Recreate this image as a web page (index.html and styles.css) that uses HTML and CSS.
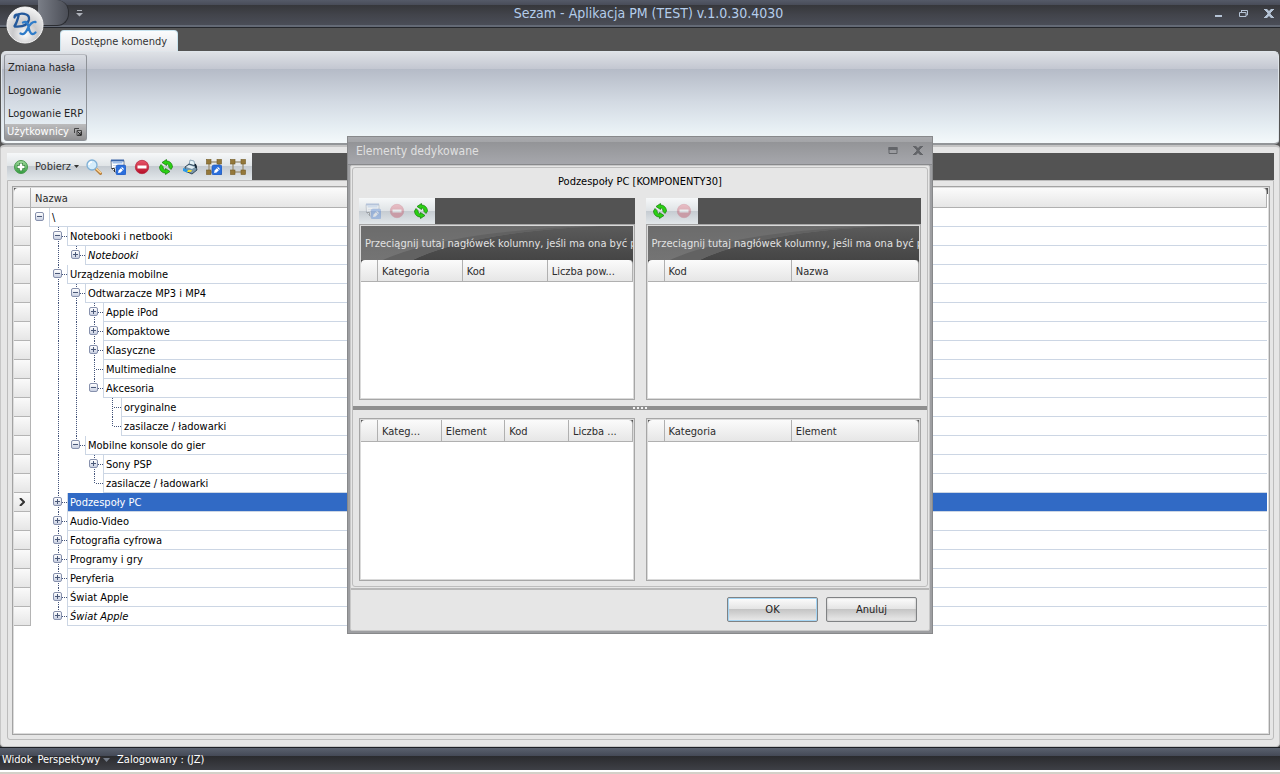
FILE: index.html
```
<!DOCTYPE html>
<html lang="pl">
<head>
<meta charset="utf-8">
<title>Sezam - Aplikacja PM (TEST) v.1.0.30.4030</title>
<link rel="stylesheet" href="styles.css">
</head>
<body>
<svg class="defs" aria-hidden="true">
  <defs>
    <linearGradient id="gg" x1="0" y1="0" x2="0" y2="1"><stop offset="0" stop-color="#a3dba0"/><stop offset="1" stop-color="#2f9a3b"/></linearGradient>
    <linearGradient id="rg" x1="0" y1="0" x2="0" y2="1"><stop offset="0" stop-color="#e8566a"/><stop offset="1" stop-color="#b50f28"/></linearGradient>
    <linearGradient id="swoop" x1="0" y1="0" x2="0" y2="1"><stop offset="0" stop-color="#6c6c6c"/><stop offset="1" stop-color="#747474"/></linearGradient>
  </defs>
  <symbol id="i-add" viewBox="0 0 16 16"><circle cx="8" cy="8" r="6.5" fill="url(#gg)" stroke="#4a9a50"/><path d="M8 4v8M4 8h8" stroke="#2d7c35" stroke-width="4"/><path d="M8 4.500v7M4.500 8h7" stroke="#fff" stroke-width="2.500"/></symbol>
  <symbol id="i-find" viewBox="0 0 16 16"><path d="M10 10l4.500 4.500" stroke="#b8803c" stroke-width="3" stroke-linecap="round"/><path d="M10 9.500l4.500 4" stroke="#ffd79a" stroke-width="1.500" stroke-linecap="round"/><circle cx="6" cy="6" r="5" fill="#d5edfb" stroke="#7fb0d6" stroke-width="1.300"/><path d="M3 6a3 3 0 0 1 3-3" stroke="#fff" stroke-width="1.500" fill="none"/></symbol>
  <symbol id="i-pen" viewBox="0 0 16 16"><rect x="6" y="6" width="10" height="10" rx="2" fill="#2b6fdc" stroke="#1c50b4" stroke-width=".6"/><path d="M8 14l.6-2.600L12 8l2 2-3.400 3.400z" fill="#fff"/><path d="M11 9l2 2" stroke="#2b6fdc" stroke-width=".7"/></symbol>
  <symbol id="i-edit" viewBox="0 0 16 16"><path d="M1 1.500h13V13H5L1.500 9.500z" fill="#fff" stroke="#7c8798"/><path d="M1 1.500h13" stroke="#3a64a8" stroke-width="2"/><path d="M2.500 3.500h10" stroke="#9dbde8" stroke-width="2"/><path d="M3 6.500h9M3 8.500h3" stroke="#cfd7e3"/><path d="M1.500 9.500h3V13" stroke="#333" fill="none"/><use href="#i-pen"/></symbol>
  <symbol id="i-del" viewBox="0 0 16 16"><circle cx="8" cy="8" r="6.700" fill="url(#rg)" stroke="#b3213a" stroke-width=".7"/><rect x="3.500" y="6.500" width="9" height="3" fill="#fff"/></symbol>
  <symbol id="i-ref" viewBox="0 0 16 16"><g stroke="#157a0c" stroke-width=".7" stroke-linejoin="round" fill="#2bd014"><path d="M4 3.500L8.500.5V2C12 2 14.300 4.500 14.500 8L13 10.500 11 8.500C11 6 10 5 8.500 5V6.500z"/><path d="M12 12.500L7.500 15.500V14C4 14 1.700 11.500 1.500 8L3 5.500 5 7.500C5 10 6 11 7.500 11V9.500z"/></g></symbol>
  <symbol id="i-print" viewBox="0 0 16 16"><path d="M8 1l4 1 1 5-6-1z" fill="#e6f4f8" stroke="#7a96aa" stroke-width=".8"/><path d="M3 8l4-3 7 2 1 4-5 4-7-3z" fill="#7795a8" stroke="#1d3246" stroke-width=".8"/><path d="M4 8l3-2 6 2-3 2z" fill="#e2eef4"/><path d="M1 9l5 2v3l-5-2z" fill="#2999e8"/><path d="M6 11h4l-1 2H5z" fill="#f4dc28"/><path d="M13 5l1 2v2" stroke="#10202e" stroke-width="1.500" fill="none"/></symbol>
  <symbol id="i-nodes" viewBox="0 0 16 16"><path d="M3 3h10M3 13h10M3 3v10M13 3v10" stroke="#a49a84" stroke-width="1.500"/><g fill="#94783a" stroke="#735a24" stroke-width=".6"><rect x=".5" y=".5" width="4.500" height="4.500"/><rect x="11" y=".5" width="4.500" height="4.500"/><rect x=".5" y="11" width="4.500" height="4.500"/><rect x="11" y="11" width="4.500" height="4.500"/></g></symbol>
  <symbol id="i-x" viewBox="0 0 10 9"><path d="M0 0h3.500v1h1v1h1V1h1V0H10v1H9v1H8v1H7v1H6.500v1H7v1h1v1h1v1h1v1H6.500V8h-1V7h-1v1h-1v1H0V8h1V7h1V6h1V5h.5V4H3V3H2V2H1V1H0z" fill="currentColor"/></symbol>
</svg>

<header class="titlebar">
  <div class="appmenu"></div>
  <button class="logo" aria-label="Menu aplikacji">
    <svg viewBox="0 0 38 38">
      <defs><radialGradient id="lg" cx=".5" cy=".75" r=".75"><stop offset="0" stop-color="#fff"/><stop offset=".45" stop-color="#c9c9cb"/><stop offset="1" stop-color="#f6f6f6"/></radialGradient></defs>
      <circle cx="19" cy="19" r="18" fill="url(#lg)" stroke="#f4f4f4"/>
      <path d="M13 8.500C11.500 13 11 17 8.500 20M9 10C14 6 24 7 23 13.500 22 19 16 21 9 20.500M8.500 11.500C8.500 9.500 10 8.500 12 8.500" fill="none" stroke="#24599c" stroke-width="2.300" stroke-linecap="round"/>
      <path d="M17 16.500C22 14.500 22 19 23 23S26 30 29.500 26.500M29.500 16C25 15.500 23 20 21.500 23S18 29.500 14.500 27.500" fill="none" stroke="#2f7cc9" stroke-width="2.300" stroke-linecap="round"/>
    </svg>
  </button>
  <button class="qat" aria-label="Dostosuj"><svg viewBox="0 0 7 7"><path d="M1 0h5v1H1zM0 3h7L3.500 6.500z" fill="#aeb2ba"/></svg></button>
  <h1>Sezam - Aplikacja PM (TEST) v.1.0.30.4030</h1>
  <div class="winbtns">
    <button aria-label="Minimalizuj"><svg viewBox="0 0 10 9"><path d="M1 6h7v2H1z" fill="currentColor"/></svg></button>
    <button aria-label="Przywróć"><svg viewBox="0 0 10 9"><path d="M2.500 1v2M2 1.500h6.500v4.500H7" fill="none" stroke="currentColor"/><path d="M.5 3.500h6.500v4H.5z" fill="none" stroke="currentColor"/></svg></button>
    <button aria-label="Zamknij"><svg viewBox="0 0 10 9"><use href="#i-x"/></svg></button>
  </div>
</header>
<nav class="tabs"><button class="tab">Dostępne komendy</button></nav>
<section class="ribbon">
  <div class="group">
    <button>Zmiana hasła</button>
    <button>Logowanie</button>
    <button>Logowanie ERP</button>
    <div class="caption"><span>Użytkownicy</span><svg viewBox="0 0 8 8"><path d="M.5 5V.5H5M3 2.500h4.500v5H3z" fill="none" stroke="#444"/><path d="M3.500 3.500L7 7M7 4v3H4" fill="none" stroke="#222"/></svg></div>
  </div>
</section>

<main class="workspace">
  <div class="toolrow">
    <div class="tools">
      <button class="wide"><svg class="ic"><use href="#i-add"/></svg><span>Pobierz</span><svg class="arrow" viewBox="0 0 5 3"><path d="M0 0h5L2.500 3z" fill="#333"/></svg></button>
      <button aria-label="Szukaj"><svg class="ic"><use href="#i-find"/></svg></button>
      <button aria-label="Edytuj"><svg class="ic"><use href="#i-edit"/></svg></button>
      <button aria-label="Usuń"><svg class="ic"><use href="#i-del"/></svg></button>
      <button aria-label="Odśwież"><svg class="ic"><use href="#i-ref"/></svg></button>
      <button aria-label="Drukuj"><svg class="ic"><use href="#i-print"/></svg></button>
      <button aria-label="Edytuj powiązania"><svg class="ic"><use href="#i-nodes"/><use href="#i-pen"/></svg></button>
      <button aria-label="Powiązania"><svg class="ic"><use href="#i-nodes"/></svg></button>
    </div>
  </div>
  <div class="frame">
    <div class="treebox">
      <table class="tree">
        <colgroup><col class="ind"><col></colgroup>
        <thead><tr><th></th><th>Nazwa</th></tr></thead>
        <tbody>
          <tr><td></td><td><div><i><button class="m" aria-label="Zwiń"></button></i><span>\</span></div></td></tr>
          <tr><td></td><td><div><i></i><i class="t"><button class="m" aria-label="Zwiń"></button></i><span>Notebooki i netbooki</span></div></td></tr>
          <tr><td></td><td><div><i></i><i class="v"></i><i class="l"><button aria-label="Rozwiń"></button></i><span><em>Notebooki</em></span></div></td></tr>
          <tr><td></td><td><div><i></i><i class="t"><button class="m" aria-label="Zwiń"></button></i><span>Urządzenia mobilne</span></div></td></tr>
          <tr><td></td><td><div><i></i><i class="v"></i><i class="t"><button class="m" aria-label="Zwiń"></button></i><span>Odtwarzacze MP3 i MP4</span></div></td></tr>
          <tr><td></td><td><div><i></i><i class="v"></i><i class="v"></i><i class="t"><button aria-label="Rozwiń"></button></i><span>Apple iPod</span></div></td></tr>
          <tr><td></td><td><div><i></i><i class="v"></i><i class="v"></i><i class="t"><button aria-label="Rozwiń"></button></i><span>Kompaktowe</span></div></td></tr>
          <tr><td></td><td><div><i></i><i class="v"></i><i class="v"></i><i class="t"><button aria-label="Rozwiń"></button></i><span>Klasyczne</span></div></td></tr>
          <tr><td></td><td><div><i></i><i class="v"></i><i class="v"></i><i class="t"></i><span>Multimedialne</span></div></td></tr>
          <tr><td></td><td><div><i></i><i class="v"></i><i class="v"></i><i class="l"><button class="m" aria-label="Zwiń"></button></i><span>Akcesoria</span></div></td></tr>
          <tr><td></td><td><div><i></i><i class="v"></i><i class="v"></i><i></i><i class="t"></i><span>oryginalne</span></div></td></tr>
          <tr><td></td><td><div><i></i><i class="v"></i><i class="v"></i><i></i><i class="l"></i><span>zasilacze / ładowarki</span></div></td></tr>
          <tr><td></td><td><div><i></i><i class="v"></i><i class="l"><button class="m" aria-label="Zwiń"></button></i><span>Mobilne konsole do gier</span></div></td></tr>
          <tr><td></td><td><div><i></i><i class="v"></i><i></i><i class="t"><button aria-label="Rozwiń"></button></i><span>Sony PSP</span></div></td></tr>
          <tr><td></td><td><div><i></i><i class="v"></i><i></i><i class="l"></i><span>zasilacze / ładowarki</span></div></td></tr>
          <tr class="sel"><td><svg class="cur" viewBox="0 0 6 8"><path d="M1 0l4 4-4 4" fill="none" stroke="#333" stroke-width="2"/></svg></td><td><div><i></i><i class="t"><button aria-label="Rozwiń"></button></i><span>Podzespoły PC</span></div></td></tr>
          <tr><td></td><td><div><i></i><i class="t"><button aria-label="Rozwiń"></button></i><span>Audio-Video</span></div></td></tr>
          <tr><td></td><td><div><i></i><i class="t"><button aria-label="Rozwiń"></button></i><span>Fotografia cyfrowa</span></div></td></tr>
          <tr><td></td><td><div><i></i><i class="t"><button aria-label="Rozwiń"></button></i><span>Programy i gry</span></div></td></tr>
          <tr><td></td><td><div><i></i><i class="t"><button aria-label="Rozwiń"></button></i><span>Peryferia</span></div></td></tr>
          <tr><td></td><td><div><i></i><i class="t"><button aria-label="Rozwiń"></button></i><span>Świat Apple</span></div></td></tr>
          <tr><td></td><td><div><i></i><i class="l"><button aria-label="Rozwiń"></button></i><span><em>Świat Apple</em></span></div></td></tr>
        </tbody>
      </table>
    </div>
  </div>
</main>

<footer class="status"><button>Widok</button><button>Perspektywy<svg class="arrow big" viewBox="0 0 7 4"><path d="M0 0h7L3.500 4z" fill="#747b88"/></svg></button><span>Zalogowany : (JZ)</span></footer>

<div class="dialog" role="dialog" aria-labelledby="dt">
  <div class="dtitle">
    <h2 id="dt">Elementy dedykowane</h2>
    <button aria-label="Maksymalizuj"><svg viewBox="0 0 10 9"><path d="M1 1.500h8v6H1z" fill="none" stroke="currentColor"/><path d="M.5 1h9v3h-9z" fill="currentColor"/></svg></button>
    <button aria-label="Zamknij"><svg viewBox="0 0 10 9"><use href="#i-x"/></svg></button>
  </div>
  <div class="dbody">
    <div class="content">
      <p>Podzespoły PC [KOMPONENTY30]</p>
      <div class="pair top">
        <section>
          <div class="toolrow"><div class="tools">
            <button disabled aria-label="Edytuj"><svg class="ic"><use href="#i-edit"/></svg></button>
            <button disabled aria-label="Usuń"><svg class="ic"><use href="#i-del"/></svg></button>
            <button aria-label="Odśwież"><svg class="ic"><use href="#i-ref"/></svg></button>
          </div></div>
          <div class="grid">
            <div class="groupby"><svg viewBox="0 0 273 34" preserveAspectRatio="none"><path d="M0 0h240Q110 6 52 34H0z" fill="url(#swoop)"/><path d="M240 0Q90 4 22 34h30Q110 6 240 0z" fill="#626262"/></svg><span>Przeciągnij tutaj nagłówek kolumny, jeśli ma ona być po</span></div>
            <table><colgroup><col class="ind"><col><col><col></colgroup><thead><tr><th></th><th>Kategoria</th><th>Kod</th><th>Liczba pow...</th></tr></thead></table>
          </div>
        </section>
        <section>
          <div class="toolrow"><div class="tools">
            <button aria-label="Odśwież"><svg class="ic"><use href="#i-ref"/></svg></button>
            <button disabled aria-label="Usuń"><svg class="ic"><use href="#i-del"/></svg></button>
          </div></div>
          <div class="grid">
            <div class="groupby"><svg viewBox="0 0 273 34" preserveAspectRatio="none"><path d="M0 0h240Q110 6 52 34H0z" fill="url(#swoop)"/><path d="M240 0Q90 4 22 34h30Q110 6 240 0z" fill="#626262"/></svg><span>Przeciągnij tutaj nagłówek kolumny, jeśli ma ona być po</span></div>
            <table><colgroup><col class="ind"><col><col></colgroup><thead><tr><th></th><th>Kod</th><th>Nazwa</th></tr></thead></table>
          </div>
        </section>
      </div>
      <div class="splitter"><b></b><b></b><b></b><b></b></div>
      <div class="pair bottom">
        <section><div class="grid corner"><table><colgroup><col class="ind"><col><col><col><col></colgroup><thead><tr><th></th><th>Kateg...</th><th>Element</th><th>Kod</th><th>Liczba ...</th></tr></thead></table></div></section>
        <section><div class="grid corner"><table><colgroup><col class="ind"><col><col></colgroup><thead><tr><th></th><th>Kategoria</th><th>Element</th></tr></thead></table></div></section>
      </div>
    </div>
    <div class="actions"><button class="ok">OK</button><button>Anuluj</button></div>
  </div>
</div>
</body>
</html>
```
FILE: styles.css
```
* { box-sizing: border-box; }
body {
  margin: 0;
  height: 100vh;
  display: flex;
  flex-direction: column;
  overflow: hidden;
  background: #535353;
  color: #000;
  font: 11px/14px "DejaVu Sans Condensed", "DejaVu Sans", sans-serif;
}
button {
  font: inherit;
  color: inherit;
  background: none;
  border: 0;
  padding: 0;
  margin: 0;
  text-align: left;
}
svg { display: block; flex: none; }
.defs { position: absolute; width: 0; height: 0; }
.ic { width: 16px; height: 16px; }

.titlebar {
  position: relative;
  height: 28px;
  display: flex;
  align-items: center;
  padding: 0 6px 2px 76px;
  background: linear-gradient(#555a68 0, #484c58 5px, #36373b 5px, #42444b 15px, #4a4d57 25px, #646a76 25px, #646a76 27px, #25272c 27px);
}
.appmenu {
  position: absolute;
  left: 38px;
  top: 0;
  width: 31px;
  height: 26px;
  border: 1px solid #2b2d32;
  border-width: 0 1px 1px 0;
  border-radius: 0 12px 12px 0;
  background: linear-gradient(90deg, #7a7e87, #4b4e57);
}
.logo { position: absolute; left: 6px; top: 6px; z-index: 1; }
.logo svg { width: 38px; height: 38px; }
.qat svg { width: 7px; height: 7px; }
.titlebar h1 {
  flex: 1;
  margin: 0;
  text-align: center;
  font-size: 14px;
  line-height: 16px;
  font-weight: 400;
  color: #b4cdeb;
}
.winbtns { display: flex; gap: 15px; color: #b5c3d5; }
.winbtns svg { width: 10px; height: 9px; }

.tabs { height: 23px; display: flex; align-items: flex-end; padding-left: 60px; }
.tab {
  height: 21px;
  padding: 2px 10px 0;
  border: 1px solid #c9e3ee;
  border-bottom: 0;
  border-radius: 4px 4px 0 0;
  background: linear-gradient(#fbfcfd, #e4e6ea);
  color: #333;
}
.ribbon {
  height: 94px;
  margin: 0 1px;
  padding: 2px;
  border: 1px solid #dfe5ea;
  border-bottom: 2px solid #929598;
  border-radius: 5px;
  background: linear-gradient(#dee1e6 0, #c3c7d1 17px, #b5bbc7 17px, #d3dae3 50px, #e6eef3 75px, #f4f9fb 100%);
}
.group {
  width: 83px;
  height: 87px;
  border: 1px solid #8e9298;
  border-top-color: #b7bac0;
  border-radius: 3px;
  display: flex;
  flex-direction: column;
  color: #252525;
}
.group button { height: 23px; padding: 2px 0 0 3px; white-space: nowrap; }
.group .caption {
  flex: 1;
  display: flex;
  align-items: center;
  justify-content: space-between;
  padding: 0 4px 0 2px;
  color: #fff;
  background: linear-gradient(#bcbcbd, #909092);
}
.caption svg { width: 8px; height: 8px; }

.workspace {
  flex: 1;
  min-height: 0;
  display: flex;
  flex-direction: column;
  padding: 6px 5px 6px 6px;
  background: #e6e6e6;
  border: 1px solid #c6c6c6;
  border-top: 2px solid #c4c4c4;
  border-radius: 4px;
}
.toolrow { height: 27px; display: flex; background: #535353; }
.tools {
  display: flex;
  align-items: center;
  gap: 8px;
  padding: 0 6px;
  background: linear-gradient(#f6f8f9, #dfe3e6 50%, #c5cbd1 50%, #e2e7ea);
}
.tools .wide { display: flex; align-items: center; gap: 6px; color: #333; margin-right: -1px; }
.tools .wide .arrow { width: 5px; height: 3px; margin-left: -3px; }
.tools button:disabled { opacity: .3; }
.frame {
  flex: 1;
  min-height: 0;
  display: flex;
  padding: 5px 3px 4px 4px;
  border: 1px solid #bcbcbc;
  border-radius: 0 0 3px 3px;
}
.treebox { flex: 1; border: 1px solid #a3a3a3; padding: 1px 2px 1px 1px; box-shadow: inset 0 0 0 1px #dcdcdc; }
table { width: 100%; border-collapse: separate; border-spacing: 0; table-layout: fixed; }
.ind { width: 17px; }
th {
  height: 22px;
  padding: 2px 4px 0;
  text-align: left;
  font-weight: 400;
  color: #2c2c2c;
  border-right: 1px solid #b0b0b0;
  border-bottom: 1px solid #b0b0b0;
  background: linear-gradient(#fbfbfb, #e6e6e6);
  overflow: hidden;
  text-overflow: ellipsis;
  white-space: nowrap;
}
.tree th { height: 20px; }
th:first-child { border-top-left-radius: 4px; }
th:last-child { border-top-right-radius: 4px; }
.tree td { height: 19px; padding: 0; vertical-align: top; }
.tree td:first-child {
  border-right: 1px solid #b4b4b4;
  border-bottom: 1px solid #b4b4b4;
  background: linear-gradient(#fafafa, #e6e6e6);
}
.tree div { display: flex; height: 19px; }
.tree i { position: relative; width: 18px; flex: none; }
.v, .t, .l { --dot: repeating-linear-gradient(#44547a 0 1px, #fff 1px 2px); }
.v { background: var(--dot) 9px 0 / 1px 100% no-repeat; }
.t { background: var(--dot) 9px 0 / 1px 100% no-repeat, repeating-linear-gradient(90deg, #44547a 0 1px, #fff 1px 2px) 9px 9px / 9px 1px no-repeat; }
.l { background: var(--dot) 9px 0 / 1px 10px no-repeat, repeating-linear-gradient(90deg, #44547a 0 1px, #fff 1px 2px) 9px 9px / 9px 1px no-repeat; }
.tree i button {
  position: absolute;
  left: 4px;
  top: 4px;
  width: 9px;
  height: 9px;
  border: 1px solid #8791ad;
  border-radius: 2px;
  background:
    linear-gradient(#4a5878, #4a5878) center / 5px 1px no-repeat,
    linear-gradient(#4a5878, #4a5878) center / 1px 5px no-repeat,
    linear-gradient(#fff, #c9d0e2);
}
.tree i button.m { background: linear-gradient(#4a5878, #4a5878) center / 5px 1px no-repeat, linear-gradient(#fff, #c9d0e2); }
.tree span {
  flex: 1;
  padding: 3px 2px 0;
  border-left: 1px solid #ccd6e4;
  border-bottom: 1px solid #ccd6e4;
  white-space: nowrap;
}
.tree em { display: block; }
.sel span { background: #316ac5; color: #fff; }
.cur { width: 6px; height: 8px; margin: 5px auto 0; }

.status {
  height: 27px;
  display: flex;
  align-items: center;
  gap: 5px;
  padding: 0 2px;
  color: #fff;
  border-bottom: 2px solid #d4d0c8;
  background: linear-gradient(#1d2025 0, #1d2025 1px, #5a616e 1px, #444956 9px, #2a2b2e 9px, #3e4046 23px, #fff 23px);
}
.status button { display: flex; align-items: center; gap: 3px; }
.arrow.big { width: 7px; height: 4px; margin-right: 2px; }

.dialog {
  position: absolute;
  top: 136px;
  left: 50%;
  width: 586px;
  height: 498px;
  margin-left: -293px;
  display: flex;
  flex-direction: column;
  border: 1px solid #88898b;
  background: #9d9ea1;
  padding: 0 2px 2px;
}
.dtitle {
  height: 28px;
  display: flex;
  align-items: center;
  gap: 15px;
  margin: 0 -2px;
  padding: 0 9px 0 8px;
  color: #636569;
  border-bottom: 1px solid #88898c;
  background: linear-gradient(#a9aaae 0, #a3a4a7 5px, #939497 5px, #a6a7ac 100%);
}
.dtitle h2 { flex: 1; margin: 0; font-size: 12px; line-height: 16px; font-weight: 400; color: #e0e0e0; }
.dtitle svg { width: 10px; height: 9px; }
.dbody {
  flex: 1;
  display: flex;
  flex-direction: column;
  padding: 1px 1px 0;
  border: 1px solid #c8c8c8;
  border-radius: 2px;
  background: #e6e6e6;
}
.content {
  flex: 1;
  display: flex;
  flex-direction: column;
  border: 1px solid #bdbdbd;
  border-radius: 3px;
}
.content p { margin: 7px 0 9px; text-align: center; }
.pair { display: grid; grid-template-columns: 1fr 1fr; gap: 11px; padding: 0 6px; }
.pair section { display: flex; flex-direction: column; min-width: 0; }
.pair .toolrow { height: 26px; }
.top { flex: 202; }
.bottom { flex: 163; margin: 8px 0 5px; }
.grid { flex: 1; border: 1px solid #a6a6a6; outline: 1px solid #dadada; outline-offset: -2px; padding: 1px; }
.groupby {
  position: relative;
  height: 34px;
  padding-left: 4px;
  background: linear-gradient(#5b5b5b, #454545);
  color: #e2e2e2;
  white-space: nowrap;
}
.groupby svg { position: absolute; left: 0; top: 0; width: 100%; height: 100%; }
.groupby span { position: relative; display: block; overflow: hidden; padding-top: 1px; line-height: 33px; }
.grid { background: linear-gradient(#454545, #454545) 0 35px / 100% 8px no-repeat #fff; }
.corner, .treebox { background: linear-gradient(#555, #555) 0 1px / 100% 6px no-repeat #fff; }
.splitter {
  height: 4px;
  margin-top: 6px;
  display: flex;
  align-items: center;
  justify-content: center;
  gap: 2px;
  background: #8f8f8f;
}
.splitter b { width: 2px; height: 2px; background: #f2f2f2; }
.actions {
  height: 42px;
  margin: 1px -1px 0;
  padding: 7px 12px 0;
  display: flex;
  justify-content: flex-end;
  gap: 8px;
  border-top: 2px solid #b8b8b8;
}
.actions button {
  width: 91px;
  height: 25px;
  text-align: center;
  color: #222;
  border: 1px solid #808284;
  border-radius: 2px;
  background: linear-gradient(#fdfdfd, #e4e4e4 48%, #c5c5c5 50%, #ebebeb);
  box-shadow: inset 0 0 2px #aaa;
}
.actions .ok { box-shadow: inset 0 0 0 1px #a5d6f5; }
```
